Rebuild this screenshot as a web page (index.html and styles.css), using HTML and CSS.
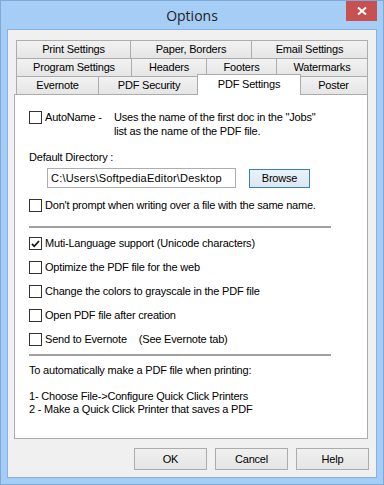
FILE: index.html
```html
<!DOCTYPE html>
<html lang="en">
<head>
    <meta charset="UTF-8">
    <meta name="viewport" content="width=device-width, initial-scale=1.0">
    <title>Options</title>
    <link rel="stylesheet" href="styles.css">
</head>
<body>
    <div class="window">
        <div class="titlebar">
            <span></span>
            <div class="title">Options</div>
            <button class="close" aria-label="Close">
                <svg width="10" height="8" viewBox="0 0 10 8"><path d="M1 0.5 L9 7.5 M9 0.5 L1 7.5" stroke="#fff" stroke-width="2"/></svg>
            </button>
        </div>

        <div class="client">
            <!-- Tab strip, three rows -->
            <div class="tabs">
                <div class="tab-row row-1">
                    <div class="tab">Print Settings</div>
                    <div class="tab">Paper, Borders</div>
                    <div class="tab last">Email Settings</div>
                </div>
                <div class="tab-row row-2">
                    <div class="tab">Program Settings</div>
                    <div class="tab">Headers</div>
                    <div class="tab">Footers</div>
                    <div class="tab last">Watermarks</div>
                </div>
                <div class="tab-row row-3">
                    <div class="tab">Evernote</div>
                    <div class="tab">PDF Security</div>
                    <div class="tab selected">PDF Settings</div>
                    <div class="tab last">Poster</div>
                </div>
            </div>

            <div class="panel">
                <div class="check-row auto-row">
                    <span class="box"></span>
                    <span class="auto-label">AutoName -</span>
                    <span class="auto-desc">Uses the name of the first doc in the "Jobs"<br>list as the name of the PDF file.</span>
                </div>

                <div class="dir-label">Default Directory :</div>
                <div class="path-row">
                    <div class="textbox">C:\Users\SoftpediaEditor\Desktop</div>
                    <button class="btn browse">Browse</button>
                </div>

                <div class="check-row prompt-row">
                    <span class="box"></span>
                    <span>Don't prompt when writing over a file with the same name.</span>
                </div>

                <div class="separator"></div>

                <div class="options">
                    <div class="check-row">
                        <span class="box checked">
                            <svg width="9" height="8" viewBox="0 0 9 8"><path d="M1 4 L3.3 6.3 L8 1" stroke="#1a1a1a" stroke-width="1.8" fill="none"/></svg>
                        </span>
                        <span>Muti-Language support (Unicode characters)</span>
                    </div>
                    <div class="check-row">
                        <span class="box"></span>
                        <span>Optimize the PDF file for the web</span>
                    </div>
                    <div class="check-row">
                        <span class="box"></span>
                        <span>Change the colors to grayscale in the PDF file</span>
                    </div>
                    <div class="check-row">
                        <span class="box"></span>
                        <span>Open PDF file after creation</span>
                    </div>
                    <div class="check-row">
                        <span class="box"></span>
                        <span>Send to Evernote</span>
                        <span class="hint">(See Evernote tab)</span>
                    </div>
                </div>

                <div class="separator second"></div>

                <div class="notes">To automatically make a PDF file when printing:

1- Choose File-&gt;Configure Quick Click Printers
2 - Make a Quick Click Printer that saves a PDF</div>
            </div>

            <div class="button-row">
                <button class="btn">OK</button>
                <button class="btn">Cancel</button>
                <button class="btn">Help</button>
            </div>
        </div>
    </div>
</body>
</html>
```

FILE: styles.css
```css
/* Reset */
* {
    margin: 0;
    padding: 0;
    box-sizing: border-box;
}

body {
    font-family: "Liberation Sans", Arial, sans-serif;
    font-size: 11px;
    letter-spacing: -0.2px;
    color: #000;
    background: #a6cdf5;
}

/* Window frame */
.window {
    width: 384px;
    height: 485px;
    border: 1px solid #7ea8d8;
    background: #a6cdf5;
    display: flex;
    flex-direction: column;
}

.titlebar {
    height: 28px;
    display: grid;
    grid-template-columns: 1fr auto 1fr;
}

.title {
    align-self: center;
    font-family: "Open Sans", "Noto Sans", sans-serif;
    font-size: 14px;
    letter-spacing: 0;
    color: #222;
}

.close {
    justify-self: end;
    width: 31px;
    height: 20px;
    margin-right: 6px;
    border: none;
    background: #c75050;
    display: flex;
    align-items: center;
    justify-content: center;
}

/* Client area */
.client {
    flex: 1;
    margin: 0 6px 6px;
    border: 1px solid #8cb0dc;
    background: #f0f0f0;
    padding: 10px 8px 0 6px;
    display: flex;
    flex-direction: column;
}

/* Tabs */
.tabs {
    padding-left: 2px;
}

.tab-row {
    display: grid;
    grid-auto-rows: 18px;
}

.row-1 { grid-template-columns: 114px 121px 1fr; }
.row-2 { grid-template-columns: 115px 75px 70px 1fr; }
.row-3 { grid-template-columns: 82px 101px 100px 1fr; }

.tab {
    border-top: 1px solid #acacac;
    border-left: 1px solid #acacac;
    background: linear-gradient(#f2f2f2, #e5e5e5);
    display: flex;
    align-items: center;
    justify-content: center;
    line-height: 13px;
    white-space: nowrap;
}

.tab.last {
    border-right: 1px solid #acacac;
}

.tab.selected {
    position: relative;
    z-index: 1;
    margin: -2px -2px -1px -2px;
    border: 1px solid #acacac;
    border-bottom: none;
    background: #fff;
    padding-bottom: 2px;
}

/* Page panel */
.panel {
    height: 345px;
    border: 1px solid #acacac;
    background: #fff;
    padding: 15px 14px 0;
    line-height: 14px;
}

.check-row {
    display: flex;
    align-items: flex-start;
    white-space: nowrap;
}

.box {
    width: 13px;
    height: 13px;
    margin: 1px 3px 0 0;
    border: 1px solid #333;
    background: #fff;
    flex: none;
    display: flex;
    align-items: center;
    justify-content: center;
}

.auto-label {
    width: 69px;
    flex: none;
}

.dir-label {
    margin-top: 12px;
}

.path-row {
    display: flex;
    align-items: center;
    margin-top: 4px;
    padding-left: 18px;
}

.textbox {
    width: 189px;
    height: 20px;
    border: 1px solid #abadb3;
    padding-left: 3px;
    line-height: 18px;
    letter-spacing: 0.2px;
}

.prompt-row {
    margin-top: 10px;
}

.separator {
    width: 302px;
    height: 2px;
    margin-top: 14px;
    background: #a0a0a0;
}

.separator.second {
    margin-top: 8px;
}

.options {
    margin-top: 8px;
    display: flex;
    flex-direction: column;
    gap: 10px;
}

.hint {
    margin-left: 12px;
}

.notes {
    margin-top: 8px;
    line-height: 13px;
    white-space: pre-line;
}

/* Buttons */
.btn {
    font-family: "Liberation Sans", Arial, sans-serif;
    font-size: 11px;
    letter-spacing: -0.2px;
    color: #000;
    width: 73px;
    height: 22px;
    border: 1px solid #acacac;
    background: linear-gradient(#f0f0f0, #e5e5e5);
}

.btn.browse {
    width: 61px;
    height: 19px;
    margin-left: 13px;
    border-color: #3c7fb1;
    background: linear-gradient(#eaf2fa, #dde7f2);
}

.button-row {
    display: flex;
    justify-content: flex-end;
    gap: 8px;
    margin: 9px -1px 0 0;
}
```
